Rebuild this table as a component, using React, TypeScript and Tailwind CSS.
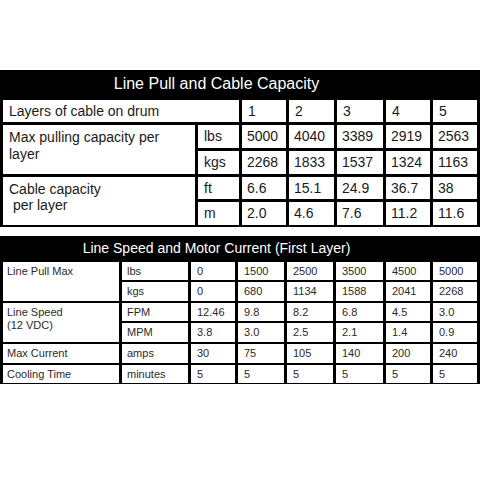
import { Fragment } from 'react';

const font = { fontFamily: '"Liberation Sans", Arial, sans-serif' };

const pullRows = [
  { unit: 'lbs', values: ['5000', '4040', '3389', '2919', '2563'] },
  { unit: 'kgs', values: ['2268', '1833', '1537', '1324', '1163'] },
];

const cableRows = [
  { unit: 'ft', values: ['6.6', '15.1', '24.9', '36.7', '38'] },
  { unit: 'm', values: ['2.0', '4.6', '7.6', '11.2', '11.6'] },
];

const speedRows = [
  { label: 'Line Pull Max', span: 2, unit: 'lbs', values: ['0', '1500', '2500', '3500', '4500', '5000'] },
  { unit: 'kgs', values: ['0', '680', '1134', '1588', '2041', '2268'] },
  { label: 'Line Speed\n(12 VDC)', span: 2, unit: 'FPM', values: ['12.46', '9.8', '8.2', '6.8', '4.5', '3.0'] },
  { unit: 'MPM', values: ['3.8', '3.0', '2.5', '2.1', '1.4', '0.9'] },
  { label: 'Max Current', span: 1, unit: 'amps', values: ['30', '75', '105', '140', '200', '240'] },
  { label: 'Cooling Time', span: 1, unit: 'minutes', values: ['5', '5', '5', '5', '5', '5'] },
];

function Cell({ children, className = '' }: { children?: React.ReactNode; className?: string }) {
  return <div className={`bg-white flex items-center ${className}`}>{children}</div>;
}

function CapacityTable() {
  return (
    <div className="bg-black px-[3px] pb-[2px]">
      <div className="grid grid-cols-[192px_41px_44px_45px_46px_44px_44px] grid-rows-[27px_22px_23px_23px_22px_23px] gap-[3px] text-[14px] text-[#1a1a1a]">
        <div className="col-span-6 flex items-center justify-center text-white text-[16px] pt-[1px]">
          Line Pull and Cable Capacity
        </div>
        <div className="bg-black" />

        <Cell className="col-span-2 pl-[6px]">Layers of cable on drum</Cell>
        {['1', '2', '3', '4', '5'].map((v) => (
          <Cell key={v} className="pl-[6px]">{v}</Cell>
        ))}

        <div className="row-span-2 bg-white pl-[6px] pt-[4px] leading-[17px]">
          Max pulling capacity per
          <br />
          layer
        </div>
        {pullRows.map((r) => (
          <Fragment key={r.unit}>
            <Cell className="pl-[6px]">{r.unit}</Cell>
            {r.values.map((v, i) => (
              <Cell key={i} className="pl-[5px]">{v}</Cell>
            ))}
          </Fragment>
        ))}

        <div className="row-span-2 bg-white pl-[6px] pt-[4px] leading-[16px] whitespace-pre">
          {'Cable capacity\n per layer'}
        </div>
        {cableRows.map((r) => (
          <Fragment key={r.unit}>
            <Cell className="pl-[6px]">{r.unit}</Cell>
            {r.values.map((v, i) => (
              <Cell key={i} className="pl-[5px]">{v}</Cell>
            ))}
          </Fragment>
        ))}
      </div>
    </div>
  );
}

function SpeedTable() {
  return (
    <div className="bg-black px-[3px] pb-[1px]">
      <div className="grid grid-cols-[116px_66px_44px_46px_46px_47px_44px_44px] grid-rows-[24px_18px_19px_18px_19px_19px_18px] gap-x-[3px] gap-y-[2px] text-[11px] text-[#2a2a2a]">
        <div className="col-span-7 flex items-center justify-center text-white text-[14px]">
          Line Speed and Motor Current (First Layer)
        </div>
        <div className="bg-black" />

        {speedRows.map((r, ri) => (
          <Fragment key={ri}>
            {r.label && (
              <div
                className={`bg-white pl-[4px] leading-[13px] whitespace-pre ${
                  r.span === 2 ? 'row-span-2 pt-[3px]' : 'flex items-center'
                }`}
              >
                {r.label}
              </div>
            )}
            <Cell className="pl-[5px]">{r.unit}</Cell>
            {r.values.map((v, i) => (
              <Cell key={i} className="pl-[6px]">{v}</Cell>
            ))}
          </Fragment>
        ))}
      </div>
    </div>
  );
}

export default function App() {
  return (
    <div className="w-[480px] h-[480px] bg-white overflow-hidden" style={font}>
      <div className="h-[70px]" />
      <CapacityTable />
      <div className="h-[9px]" />
      <SpeedTable />
    </div>
  );
}
